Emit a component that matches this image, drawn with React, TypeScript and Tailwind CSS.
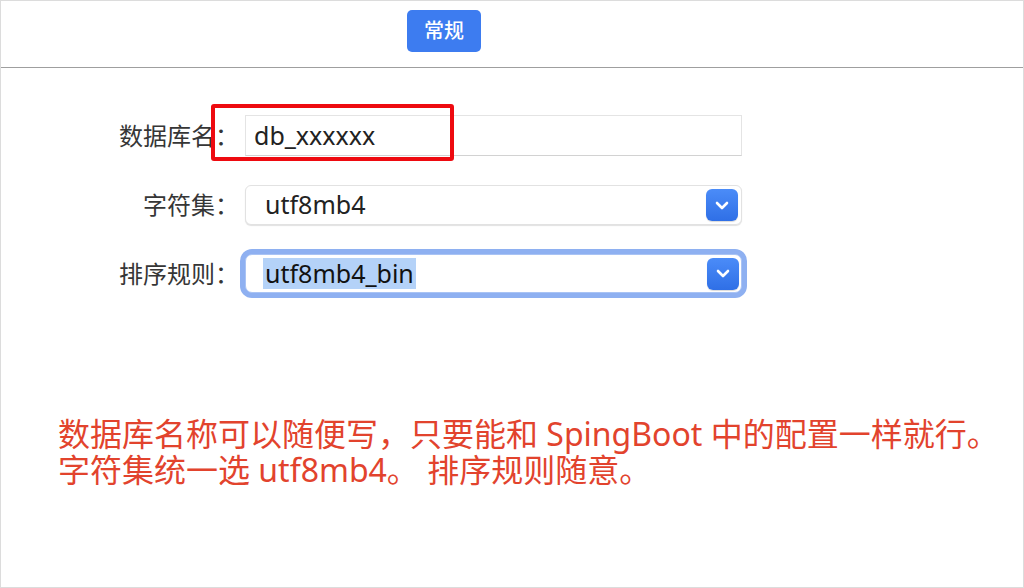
import React from 'react';

const Chevron = () => (
  <span className="flex h-[32px] w-[32px] items-center justify-center rounded-[6px] bg-gradient-to-b from-[#4b8cf8] to-[#2f6fe6] shadow-[0_1px_1px_rgba(0,0,0,0.15)]">
    <svg width="14" height="9" viewBox="0 0 14 9" fill="none">
      <path d="M2 2l5 5 5-5" stroke="white" strokeWidth="2.6" strokeLinecap="round" strokeLinejoin="round" />
    </svg>
  </span>
);

const App = () => {
  return (
    <div
      className="relative h-[588px] w-[1024px] overflow-hidden border border-[#dcdcdc] bg-white"
      style={{ fontFamily: '"Noto Sans", "Noto Sans CJK SC", sans-serif' }}
    >
      {/* Tab bar */}
      <div className="h-[67px] border-b border-[#9f9f9f] pl-[406px] pt-[9px]">
        <button className="flex h-[42px] w-[74px] items-center justify-center rounded-[5px] bg-[#3d7cf0] text-[20px] font-medium text-white">
          常规
        </button>
      </div>

      {/* Form */}
      <div className="ml-[99px] grid grid-cols-[139px_497px] items-center gap-x-[6px] gap-y-[29px] pt-[47px]">
        <div className="text-right text-[24px] text-[#363636]">数据库名：</div>
        <div className="relative">
          <div className="flex h-[41px] items-center border border-[#e4e4e4] border-b-[#d2d2d2] bg-white pl-[8px] text-[25px] text-[#222]">
            db_xxxxxx
          </div>
          {/* annotation box */}
          <div className="absolute left-[-34px] top-[-11px] h-[57px] w-[243px] rounded-[3px] border-[4px] border-[#ee0a10]" />
        </div>

        <div className="text-right text-[24px] text-[#363636]">字符集：</div>
        <div className="flex h-[40px] items-center justify-between rounded-[6px] border border-[#e2e2e2] bg-white pl-[19px] pr-[3px] text-[25px] text-[#222] shadow-[0_1px_1px_rgba(0,0,0,0.12)]">
          <span>utf8mb4</span>
          <Chevron />
        </div>

        <div className="text-right text-[24px] text-[#363636]">排序规则：</div>
        <div className="flex h-[39px] items-center justify-between rounded-[7px] border border-[#a9c3f4] bg-white pl-[17px] pr-[2px] text-[25px] text-[#111] ring-[5px] ring-[#8eb0f1]">
          <span className="bg-[#b4d2f8] px-[2px] leading-[31px]">utf8mb4_bin</span>
          <Chevron />
        </div>
      </div>

      {/* Note */}
      <div className="ml-[57px] mt-[123px] text-[32px] leading-[36px] text-[#e2432d]">
        <p>数据库名称可以随便写，只要能和 SpingBoot 中的配置一样就行。</p>
        <p>字符集统一选 utf8mb4。 排序规则随意。</p>
      </div>
    </div>
  );
};

export default App;
